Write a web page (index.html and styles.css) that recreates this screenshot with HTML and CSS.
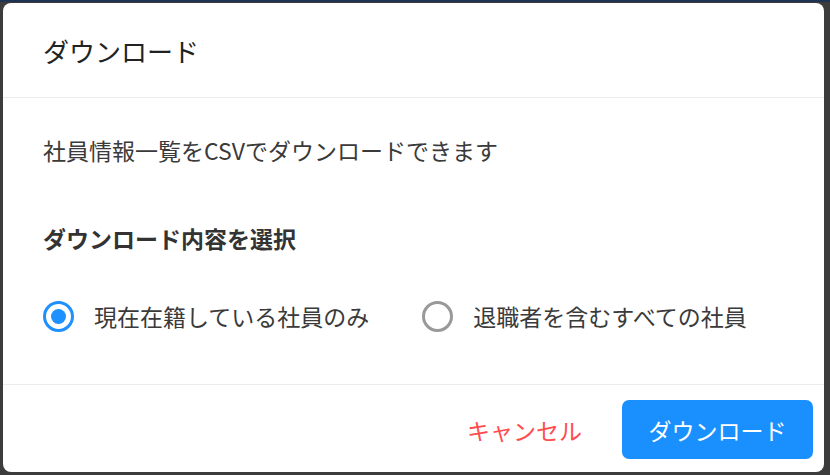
FILE: index.html
```html
<!DOCTYPE html>
<html lang="ja">
<head>
  <meta charset="UTF-8">
  <meta name="viewport" content="width=device-width, initial-scale=1.0">
  <title>ダウンロード</title>
  <link rel="stylesheet" href="styles.css">
</head>
<body>
  <div class="backdrop">
    <div class="modal">
      <div class="modal-header">
        <h2>ダウンロード</h2>
      </div>
      <div class="modal-body">
        <p class="desc">社員情報一覧をCSVでダウンロードできます</p>
        <h3>ダウンロード内容を選択</h3>
        <div class="radios">
          <label class="radio checked"><span class="dot"></span>現在在籍している社員のみ</label>
          <label class="radio"><span class="dot"></span>退職者を含むすべての社員</label>
        </div>
      </div>
      <div class="modal-footer">
        <button class="btn-cancel">キャンセル</button>
        <button class="btn-primary">ダウンロード</button>
      </div>
    </div>
  </div>
</body>
</html>
```

FILE: styles.css
```css
html, body {
  margin: 0;
  height: 100%;
}
body {
  background: #3c3c3c;
  font-family: "Noto Sans CJK JP", "Noto Sans", sans-serif;
  box-sizing: border-box;
  border-top: 2px solid #1d3350;
}
.backdrop {
  padding: 1px 6px 3px 3px;
  height: 100%;
  box-sizing: border-box;
}
.modal {
  background: white;
  border-radius: 8px;
  height: 100%;
  display: flex;
  flex-direction: column;
}
.modal-header {
  height: 94px;
  padding: 0 40px;
  display: flex;
  align-items: center;
  border-bottom: 1px solid #ececec;
}
.modal-header h2 {
  margin: 0;
  font-size: 26px;
  font-weight: 400;
  color: #222;
}
.modal-body {
  flex: 1;
  padding: 34px 40px 0;
}
.desc {
  margin: 0;
  font-size: 23px;
  line-height: 36px;
  color: #3a3a3a;
}
.modal-body h3 {
  margin: 52px 0 0;
  font-size: 23px;
  line-height: 36px;
  font-weight: 700;
  color: #333;
}
.radios {
  display: flex;
  gap: 53px;
  margin-top: 42px;
}
.radio {
  display: flex;
  align-items: center;
  gap: 20px;
  font-size: 23px;
  line-height: 36px;
  color: #3a3a3a;
}
.dot {
  width: 31px;
  height: 31px;
  box-sizing: border-box;
  border: 3px solid #999;
  border-radius: 50%;
  display: flex;
  align-items: center;
  justify-content: center;
}
.checked .dot {
  border-color: #1e90ff;
}
.checked .dot::after {
  content: "";
  width: 15px;
  height: 15px;
  border-radius: 50%;
  background: #1e90ff;
}
.modal-footer {
  border-top: 1px solid #ececec;
  padding: 15px 11px 13px;
  display: flex;
  justify-content: flex-end;
  align-items: center;
  gap: 20px;
}
button {
  font-family: inherit;
  font-size: 23px;
  border: none;
  cursor: pointer;
}
.btn-cancel {
  background: none;
  color: #ff4d4f;
  padding: 0 20px;
  height: 58px;
}
.btn-primary {
  background: #1a90ff;
  color: white;
  width: 191px;
  height: 59px;
  border-radius: 7px;
}
```
